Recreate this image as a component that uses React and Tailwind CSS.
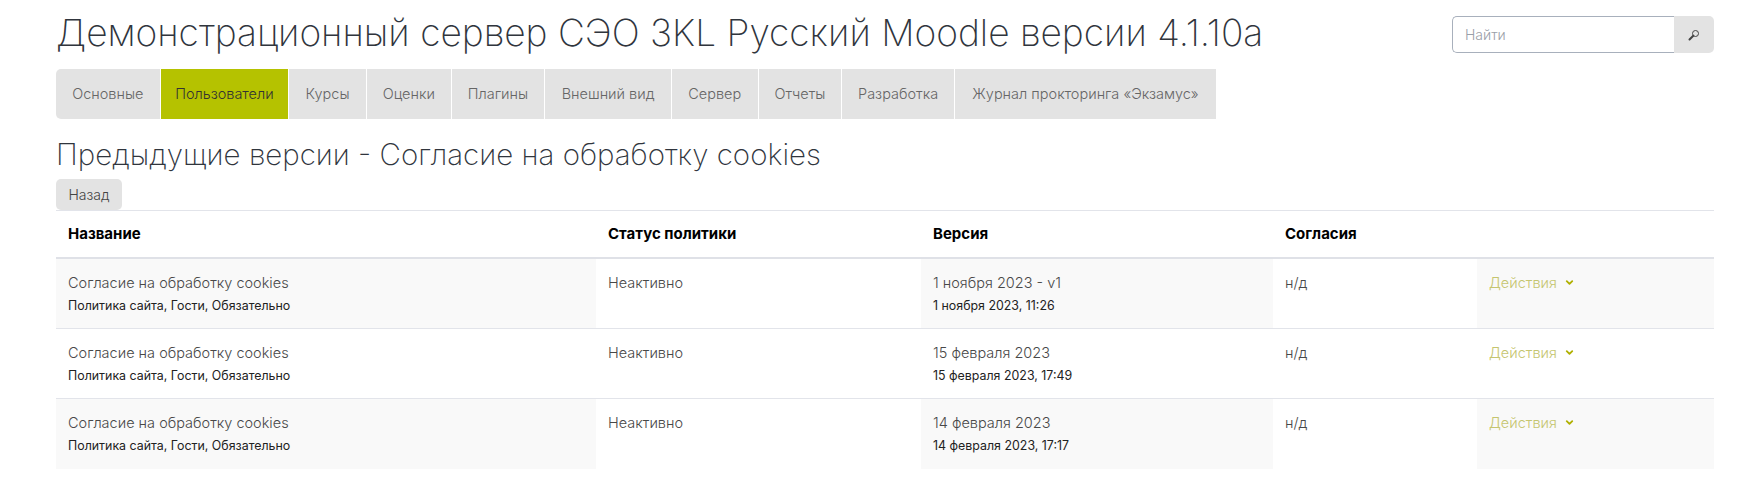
import { ChevronDown } from 'lucide-react';

const navItems = [
  { label: 'Основные', w: 'w-[104px]' },
  { label: 'Пользователи', w: 'w-[128px]', active: true },
  { label: 'Курсы', w: 'w-[77px]' },
  { label: 'Оценки', w: 'w-[84px]' },
  { label: 'Плагины', w: 'w-[93px]' },
  { label: 'Внешний вид', w: 'w-[126px]' },
  { label: 'Сервер', w: 'w-[86px]' },
  { label: 'Отчеты', w: 'w-[83px]' },
  { label: 'Разработка', w: 'w-[112px]' },
  { label: 'Журнал прокторинга «Экзамус»', w: 'w-[262px]' },
];

const rows = [
  { version: '1 ноября 2023 - v1', date: '1 ноября 2023, 11:26', shaded: true },
  { version: '15 февраля 2023', date: '15 февраля 2023, 17:49' },
  { version: '14 февраля 2023', date: '14 февраля 2023, 17:17', shaded: true },
];

const SearchIcon = () => (
  <svg width="12" height="12" viewBox="0 0 12 12" fill="none">
    <circle cx="7.5" cy="4.5" r="3" stroke="#444" strokeWidth="1" />
    <path d="M5.3 6.7 1.5 10.5" stroke="#444" strokeWidth="2" strokeLinecap="round" />
  </svg>
);

const App = () => {
  return (
    <div className="h-[498px] overflow-hidden bg-white pl-14 text-[#484848] font-['Inter','Noto_Sans',sans-serif] font-light">
      <header className="flex h-[69px] items-start justify-between pr-[29px]">
        <h1 className="mt-[8px] text-[37.1px] leading-[50px] font-extralight text-[#30353d] whitespace-nowrap">
          Демонстрационный сервер СЭО 3KL Русский Moodle версии 4.1.10a
        </h1>
        <div className="mt-4 flex h-[37px]">
          <div className="flex w-[222px] items-center rounded-l-[5px] border border-r-0 border-[#a8b0bc] pl-3 text-[14px] text-[#9aa0a8]">
            Найти
          </div>
          <button className="flex w-10 items-center justify-center rounded-r-[5px] bg-[#e3e3e3]">
            <SearchIcon />
          </button>
        </div>
      </header>

      <nav className="flex h-[50px] w-[1160px] gap-px">
        {navItems.map((item, i) => (
          <a
            key={item.label}
            className={`flex items-center justify-center whitespace-nowrap text-[14.5px] ${item.w} ${
              item.active ? 'bg-[#b5c200] text-[#333]' : 'bg-[#e3e3e3] text-[#666]'
            } ${i === 0 ? 'rounded-l-[5px]' : ''}`}
          >
            {item.label}
          </a>
        ))}
      </nav>

      <h2 className="mt-[17px] text-[29.5px] leading-[36px] font-extralight text-[#30353d]">
        Предыдущие версии - Согласие на обработку cookies
      </h2>
      <button className="mt-[7px] block h-[31px] w-[66px] rounded-[5px] bg-[#e3e3e3] text-[14px] text-[#444]">
        Назад
      </button>

      <div className="w-[1658px] border-t border-[#e2e4ea] text-[14.5px]">
        <div className="grid h-[48px] grid-cols-[540px_325px_352px_204px_1fr] items-center border-b-[2px] border-[#dfe1e7] text-[15px] font-bold text-black">
          <div className="px-3">Название</div>
          <div className="px-3">Статус политики</div>
          <div className="px-3">Версия</div>
          <div className="px-3">Согласия</div>
          <div />
        </div>
        {rows.map((row) => (
          <div
            key={row.date}
            className="grid h-[70px] grid-cols-[540px_325px_352px_204px_1fr] border-b border-[#e2e4ea] last:border-b-0"
          >
            <div className={`px-3 pt-[14px] ${row.shaded ? 'bg-[#f9f9f9]' : ''}`}>
              <div className="leading-[20px]">Согласие на обработку cookies</div>
              <div className="mt-[4px] text-[12.4px] leading-[18px] font-normal text-[#222]">
                Политика сайта, Гости, Обязательно
              </div>
            </div>
            <div className="px-3 pt-[14px] leading-[20px]">Неактивно</div>
            <div className={`px-3 pt-[14px] ${row.shaded ? 'bg-[#f9f9f9]' : ''}`}>
              <div className="leading-[20px]">{row.version}</div>
              <div className="mt-[4px] text-[12.4px] leading-[18px] font-normal text-[#222]">{row.date}</div>
            </div>
            <div className="px-3 pt-[14px] leading-[20px]">н/д</div>
            <div className={`flex items-start gap-[7px] px-[12px] pt-[14px] leading-[20px] text-[#c5c56e] ${row.shaded ? 'bg-[#f9f9f9]' : ''}`}>
              Действия
              <ChevronDown size={11} strokeWidth={4} className="mt-[4px] text-[#b0b000]" />
            </div>
          </div>
        ))}
      </div>
    </div>
  );
};

export default App;
